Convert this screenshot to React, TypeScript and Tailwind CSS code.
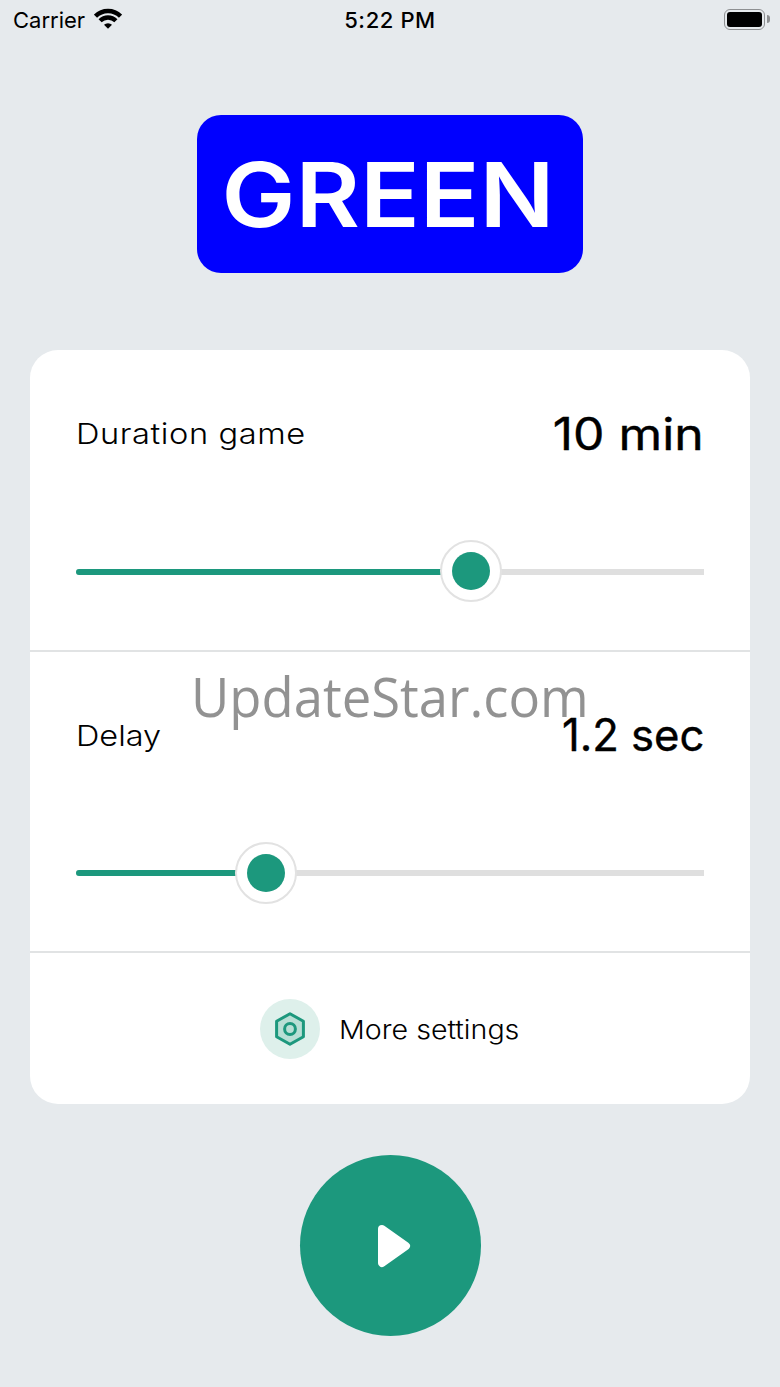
import React from 'react';

interface SliderRowProps {
  label: string;
  value: string;
  percent: number;
  labelClass: string;
  valueClass: string;
}

const SliderRow: React.FC<SliderRowProps> = ({ label, value, percent, labelClass, valueClass }) => {
  return (
    <section className="h-[301.5px] border-b-2 border-[#e1e3e4] px-[46px] pt-[54px]">
      <div className="flex h-[60px] items-center justify-between whitespace-nowrap">
        <span className={`origin-left text-[29px] font-light ${labelClass}`}>{label}</span>
        <span className={`origin-right text-[44.5px] ${valueClass}`}>{value}</span>
      </div>
      <div className="relative mt-[76px] flex h-[62px] items-center">
        <div className="mt-px h-[6px] w-[628px] shrink-0 overflow-hidden rounded-l-full bg-[#dfdfdf]">
          <div className="h-full bg-[#1c987d]" style={{ width: `${percent}%` }} />
        </div>
        <div
          className="absolute top-0 flex size-[62px] -translate-x-1/2 items-center justify-center rounded-full border-2 border-[#e2e2e2] bg-white"
          style={{ left: `${percent}%` }}
        >
          <div className="size-[38px] rounded-full bg-[#1c987d]" />
        </div>
      </div>
    </section>
  );
};

const StatusBar: React.FC = () => {
  return (
    <header className="grid h-10 grid-cols-3 items-center pl-[13px] pr-[10px] text-[22px]">
      <div className="flex items-center gap-[9px]">
        <span>Carrier</span>
        <svg className="-mt-[4px]" width="28" height="21" viewBox="0 0 28 21" fill="none" stroke="#000" strokeWidth="4.4">
          <path d="M1.5 8.2a17.7 17.7 0 0 1 25 0M6.1 12.8a11.2 11.2 0 0 1 15.8 0" />
          <path d="M14 20.8l-4-4a5.7 5.7 0 0 1 8 0z" fill="#000" stroke="none" />
        </svg>
      </div>
      <span className="-ml-[3px] text-center font-medium tracking-[0.6px]">5:22 PM</span>
      <div className="-mt-[2px] flex items-center justify-end gap-[2px]">
        <div className="h-[21px] w-[41px] rounded-[6px] border-[1.5px] border-[#8e9092] p-[2px]">
          <div className="h-full rounded-[3px] bg-black" />
        </div>
        <div className="h-[8px] w-[3px] rounded-r-full bg-[#8e9092]" />
      </div>
    </header>
  );
};

const App: React.FC = () => {
  return (
    <main className="flex h-[1387px] w-[780px] flex-col items-center overflow-hidden bg-[#e6eaed] font-['Inter',sans-serif] text-black">
      <div className="w-full">
        <StatusBar />
      </div>

      <div className="mt-[75px] flex h-[158px] w-[386px] items-center justify-center rounded-[24px] bg-[#0000ff]">
        <span className="mr-[3px] scale-x-[1.11] text-[89px] leading-none font-semibold text-white">GREEN</span>
      </div>

      <div className="relative mt-[77px] h-[754px] w-[720px] rounded-[28px] bg-white">
        <SliderRow
          label="Duration game"
          value="10 min"
          percent={62.9}
          labelClass="scale-x-[1.125] tracking-[0.5px]"
          valueClass="scale-x-[1.12] [-webkit-text-stroke:0.4px_black]"
        />
        <SliderRow
          label="Delay"
          value="1.2 sec"
          percent={30.2}
          labelClass="scale-x-[1.12]"
          valueClass="scale-x-[0.98] [-webkit-text-stroke:0.4px_black]"
        />
        <div className="flex h-[151px] items-center pl-[230px]">
          <div className="flex size-[60px] items-center justify-center rounded-full bg-[#def0eb]">
            <svg width="34" height="36" viewBox="0 0 34 36" fill="none" stroke="#1c987d" strokeWidth="3" strokeLinejoin="round">
              <path d="M17 2.7L30.4 10.3V25.7L17 33.3L3.6 25.7V10.3Z" fill="#b8dfd5" />
              <circle cx="17" cy="18" r="5.4" />
            </svg>
          </div>
          <span className="mt-px ml-[19px] origin-left scale-x-[1.1] text-[26px] font-light whitespace-nowrap">
            More settings
          </span>
        </div>

        <div className="pointer-events-none absolute top-[308px] left-[161px] origin-left scale-x-[0.956] font-['Open_Sans',sans-serif] text-[55px] leading-[76px] whitespace-nowrap text-[#929292]">
          UpdateStar.com
        </div>
      </div>

      <button aria-label="Play" className="mt-[51px] flex size-[181px] items-center justify-center rounded-full bg-[#1c987d]">
        <svg className="ml-[8px]" width="34" height="44" viewBox="0 0 34 44" fill="#fff" stroke="#fff" strokeWidth="8" strokeLinejoin="round">
          <path d="M5 5L29 22L5 39Z" />
        </svg>
      </button>
    </main>
  );
};

export default App;
